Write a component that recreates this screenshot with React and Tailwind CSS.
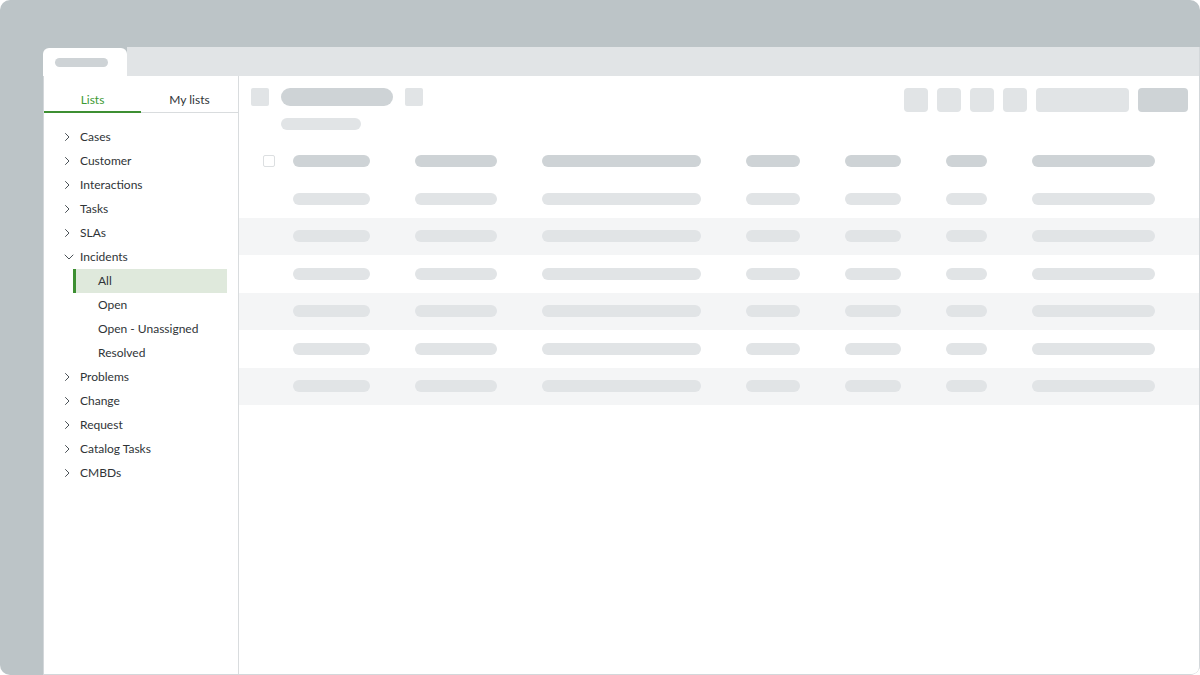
import React from 'react';

const treeItems = [
  { label: 'Cases' },
  { label: 'Customer' },
  { label: 'Interactions' },
  { label: 'Tasks' },
  { label: 'SLAs' },
  { label: 'Incidents', open: true, children: ['All', 'Open', 'Open - Unassigned', 'Resolved'] },
  { label: 'Problems' },
  { label: 'Change' },
  { label: 'Request' },
  { label: 'Catalog Tasks' },
  { label: 'CMBDs' }
];

// column widths of the skeleton table
const columns = [77, 82, 159, 54, 56, 41, 123];
const rows = [0, 1, 2, 3, 4, 5];

const Chevron = ({ open }) => (
  <svg width="10" height="10" viewBox="0 0 10 10" fill="none" stroke="#4b5257" strokeWidth="1" strokeLinecap="round" strokeLinejoin="round">
    {open ? <polyline points="1,3 5,7 9,3" /> : <polyline points="1.5,1.5 5,5 1.5,8.5" />}
  </svg>
);

const Sidebar = () => (
  <div className="w-[195px] shrink-0 border-r border-[#d9dcde] flex flex-col">
    <div className="flex h-[37px] border-b border-[#d9dcde] text-[12px] leading-[16px]">
      <div className="w-1/2 -mb-px border-b-2 border-[#3d8f32] text-center pt-[16px] text-[#3d9a33]">Lists</div>
      <div className="w-1/2 text-center pt-[16px] text-[#2f3437]">My lists</div>
    </div>
    <div className="pt-[12px] text-[12px] leading-[24px] text-[#2f3437]">
      {treeItems.map(item => (
        <div key={item.label}>
          <div className="flex items-center h-[24px] pl-[20px] gap-[6px]">
            <Chevron open={item.open} />
            <span>{item.label}</span>
          </div>
          {item.children && item.children.map((child, i) => (
            <div
              key={child}
              className={`ml-[29px] w-[154px] h-[24px] pl-[22px] border-l-[3px] ${i === 0 ? 'bg-[#dfe9dc] border-[#3d8f32]' : 'border-transparent'}`}
            >
              {child}
            </div>
          ))}
        </div>
      ))}
    </div>
  </div>
);

const Toolbar = () => (
  <div className="flex justify-between items-start pl-[12px] pr-[11px] py-[12px]">
    <div>
      <div className="flex items-center gap-[12px]">
        <div className="w-[18px] h-[18px] rounded-[2px] bg-[#e1e4e6]"></div>
        <div className="w-[112px] h-[18px] rounded-full bg-[#ced3d6]"></div>
        <div className="w-[18px] h-[18px] rounded-[2px] bg-[#e1e4e6]"></div>
      </div>
      <div className="ml-[30px] mt-[12px] w-[80px] h-[12px] rounded-full bg-[#e1e4e6]"></div>
    </div>
    <div className="flex gap-[9px]">
      <div className="w-[24px] h-[24px] rounded-[4px] bg-[#e1e4e6]"></div>
      <div className="w-[24px] h-[24px] rounded-[4px] bg-[#e1e4e6]"></div>
      <div className="w-[24px] h-[24px] rounded-[4px] bg-[#e1e4e6]"></div>
      <div className="w-[24px] h-[24px] rounded-[4px] bg-[#e1e4e6]"></div>
      <div className="w-[93px] h-[24px] rounded-[4px] bg-[#e1e4e6]"></div>
      <div className="w-[50px] h-[24px] rounded-[4px] bg-[#ced3d6]"></div>
    </div>
  </div>
);

const Table = () => (
  <div>
    <div className="flex items-center h-[38px] pl-[24px] gap-[18px]">
      <div className="w-[12px] h-[12px] rounded-[2px] border border-[#dcdfe1]"></div>
      <div className="flex gap-[45px]">
        {columns.map((w, i) => (
          <div key={i} className="h-[12px] rounded-full bg-[#ced3d6]" style={{ width: w }}></div>
        ))}
      </div>
    </div>
    {rows.map(r => (
      <div key={r} className={`flex items-center h-[37.5px] pl-[54px] ${r % 2 === 1 ? 'bg-[#f4f5f6]' : ''}`}>
        <div className="flex gap-[45px]">
          {columns.map((w, i) => (
            <div key={i} className="h-[12px] rounded-full bg-[#e1e4e6]" style={{ width: w }}></div>
          ))}
        </div>
      </div>
    ))}
  </div>
);

const App = () => (
  <div className="w-[1200px] h-[675px] bg-white" style={{ fontFamily: 'Lato, "Open Sans", sans-serif' }}>
    <div className="w-full h-full rounded-[10px] bg-[#bcc4c7] pt-[46px] pl-[43px] flex overflow-hidden">
      <div className="flex-1 flex flex-col">
        {/* tab strip */}
        <div className="flex h-[30px] shrink-0">
          <div className="w-[84px] mt-[2px] bg-white rounded-t-[6px] pl-[12px] pt-[10px]">
            <div className="w-[53px] h-[9px] rounded-full bg-[#ced3d6]"></div>
          </div>
          <div className="flex-1 mt-[1px] bg-[#e1e4e6] border-r border-[#d3d7da]"></div>
        </div>
        {/* window body */}
        <div className="flex-1 flex bg-white border-l border-r border-b border-[#d3d7da] rounded-br-[8px]">
          <Sidebar />
          <div className="flex-1">
            <Toolbar />
            <Table />
          </div>
        </div>
      </div>
    </div>
  </div>
);

export default App;
